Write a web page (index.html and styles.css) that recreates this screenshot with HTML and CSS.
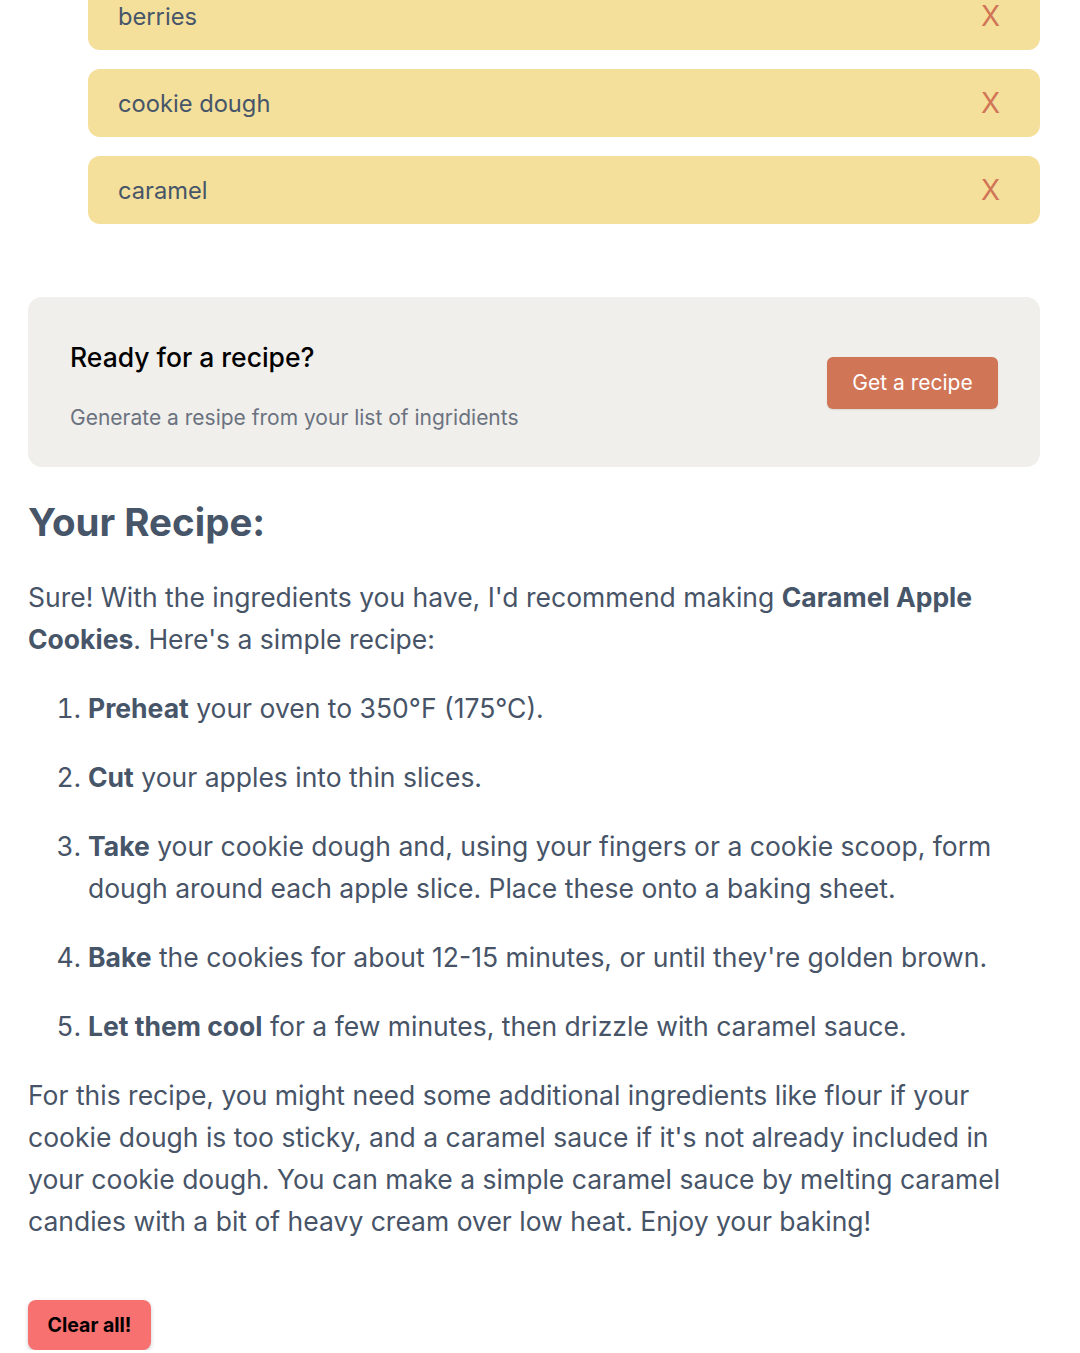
FILE: index.html
```html
<!DOCTYPE html>
<html lang="en">
<head>
<meta charset="utf-8">
<title>Recipe</title>
<link rel="stylesheet" href="styles.css">
</head>
<body>
<main class="page">
  <ul class="ingredients">
    <li class="ingredient"><span>berries</span><button class="remove">X</button></li>
    <li class="ingredient"><span>cookie dough</span><button class="remove">X</button></li>
    <li class="ingredient"><span>caramel</span><button class="remove">X</button></li>
  </ul>

  <section class="ready">
    <div class="ready-text">
      <h3>Ready for a recipe?</h3>
      <p>Generate a resipe from your list of ingridients</p>
    </div>
    <button class="get-recipe">Get a recipe</button>
  </section>

  <section class="recipe">
    <h2>Your Recipe:</h2>
    <p>Sure! With the ingredients you have, I'd recommend making <strong>Caramel Apple Cookies</strong>. Here's a simple recipe:</p>
    <ol>
      <li><strong>Preheat</strong> your oven to 350°F (175°C).</li>
      <li><strong>Cut</strong> your apples into thin slices.</li>
      <li><strong>Take</strong> your cookie dough and, using your fingers or a cookie scoop, form dough around each apple slice. Place these onto a baking sheet.</li>
      <li><strong>Bake</strong> the cookies for about 12-15 minutes, or until they're golden brown.</li>
      <li><strong>Let them cool</strong> for a few minutes, then drizzle with caramel sauce.</li>
    </ol>
    <p>For this recipe, you might need some additional ingredients like flour if your cookie dough is too sticky, and a caramel sauce if it's not already included in your cookie dough. You can make a simple caramel sauce by melting caramel candies with a bit of heavy cream over low heat. Enjoy your baking!</p>
  </section>

  <button class="clear">Clear all!</button>
</main>
</body>
</html>
```

FILE: styles.css
```css
* { box-sizing: border-box; }
html, body { margin: 0; padding: 0; background: #ffffff; }
body {
  font-family: Inter, "Noto Sans", sans-serif;
  color: #475467;
  overflow: hidden;
}
.page {
  padding: 0 40px 0 28px;
  margin-top: -18px;
}
.ingredients {
  list-style: none;
  margin: 0 0 73px 60px;
  padding: 0;
  display: flex;
  flex-direction: column;
  gap: 19px;
}
.ingredient {
  background: #f4e09b;
  border-radius: 12px;
  height: 68px;
  display: flex;
  align-items: center;
  justify-content: space-between;
  padding: 0 40px 0 30px;
  font-size: 23.7px;
  color: #475569;
}
.remove {
  border: 0;
  background: none;
  padding: 0;
  font-family: inherit;
  font-size: 28px;
  color: #d17557;
  line-height: 1;
}
.ready {
  background: #f0efeb;
  border-radius: 14px;
  height: 170px;
  display: flex;
  align-items: center;
  justify-content: space-between;
  padding: 0 42px;
}
.ready-text { padding-top: 6px; }
.ready h3 {
  margin: 0 0 32px;
  font-size: 26.5px;
  font-weight: 500;
  color: #000;
}
.ready p {
  margin: 0;
  font-size: 21px;
  color: #6b7280;
}
.get-recipe {
  background: #d17557;
  color: #fff;
  border: 0;
  border-radius: 6px;
  width: 171px;
  height: 52px;
  font-family: inherit;
  font-size: 21px;
  box-shadow: 0 1px 2px rgba(0,0,0,0.1);
  margin-top: 1px;
}
.recipe {
  font-size: 26.5px;
  line-height: 42px;
}
.recipe h2 {
  margin: 30px 0 29px;
  font-size: 38.5px;
  line-height: 50px;
  font-weight: 700;
  color: #475569;
}
.recipe strong { font-weight: 700; color: #475569; }
.recipe p { margin: 0; }
.recipe ol {
  margin: 27px 0;
  padding-left: 60px;
}
.recipe ol li { margin: 0 0 27px; padding-left: 0; }
.recipe ol li:last-child { margin-bottom: 0; }
.clear {
  margin-top: 58px;
  background: #f87171;
  color: #000;
  border: 0;
  border-radius: 8px;
  width: 123px;
  height: 50px;
  font-family: inherit;
  font-size: 19.5px;
  font-weight: 700;
  box-shadow: 0 2px 4px rgba(0,0,0,0.2);
}
```
